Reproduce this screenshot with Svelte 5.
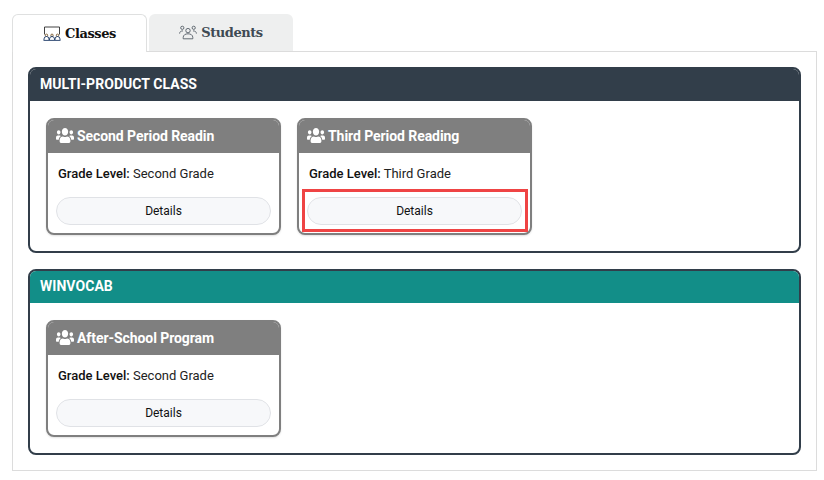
<script>
  const sections = [
    { title: 'MULTI-PRODUCT CLASS', tone: 'slate', cards: [
      { name: 'Second Period Readin', grade: 'Second Grade' },
      { name: 'Third Period Reading', grade: 'Third Grade', marked: true }
    ]},
    { title: 'WINVOCAB', tone: 'teal', cards: [
      { name: 'After-School Program', grade: 'Second Grade' }
    ]}
  ];
</script>

<div class="page">
  <div class="tabs">
    <div class="tab active">
      <svg class="tabicon" viewBox="0 0 18 15" width="18" height="15" fill="none" stroke="#2c2c2c" stroke-width="0.9">
        <path d="M1.5 8.500V1h15v7.500" />
        <circle cx="3.500" cy="9.300" r="1.200" stroke="#7a5a30"/><circle cx="9" cy="9.300" r="1.200" stroke="#7a5a30"/><circle cx="14.500" cy="9.300" r="1.200" stroke="#7a5a30"/>
        <path d="M1 14v-1a2.400 2.400 0 0 1 5 0v1M6.500 14v-1a2.400 2.400 0 0 1 5 0v1M12 14v-1a2.400 2.400 0 0 1 5 0v1M0.500 14.400h17" stroke="#1d3a66"/>
      </svg>
      <span>Classes</span>
    </div>
    <div class="tab">
      <svg class="tabicon" viewBox="0 0 18 15" width="18" height="15" fill="none" stroke="#555e66" stroke-width="0.9">
        <circle cx="9" cy="5.600" r="2.200"/><circle cx="3.300" cy="2.800" r="1.600"/><circle cx="14.700" cy="2.800" r="1.600"/>
        <path d="M4.200 13.800v-1.400c0-2.400 2.200-3.600 4.800-3.600s4.800 1.200 4.800 3.600v1.400zM0.600 8.600c0-1.700 1.300-2.800 3.400-2.700M17.400 8.600c0-1.700-1.300-2.800-3.400-2.700"/>
      </svg>
      <span>Students</span>
    </div>
  </div>
  <div class="panel">
    {#each sections as s}
      <section class="section {s.tone}">
        <h2>{s.title}</h2>
        <div class="cards">
          {#each s.cards as c}
            <article class="card">
              <h3>
                <svg viewBox="0 0 640 512" width="18" height="17" preserveAspectRatio="none" fill="#fff"><path d="M96 224c35.300 0 64-28.700 64-64s-28.700-64-64-64-64 28.700-64 64 28.700 64 64 64zm448 0c35.300 0 64-28.700 64-64s-28.700-64-64-64-64 28.700-64 64 28.700 64 64 64zm32 32h-64c-17.600 0-33.500 7.100-45.100 18.600 40.300 22.100 68.900 62 75.100 109.400h66c17.700 0 32-14.300 32-32v-32c0-35.300-28.700-64-64-64zm-256 0c61.900 0 112-50.100 112-112S381.900 32 320 32 208 82.100 208 144s50.100 112 112 112zm76.800 32h-8.300c-20.800 10-43.900 16-68.500 16s-47.600-6-68.500-16h-8.300C179.600 288 128 339.600 128 403.200V432c0 26.500 21.500 48 48 48h288c26.500 0 48-21.500 48-48v-28.800c0-63.600-51.600-115.200-115.200-115.200zm-223.700-13.400C161.500 263.100 145.600 256 128 256H64c-35.300 0-64 28.700-64 64v32c0 17.700 14.300 32 32 32h65.900c6.300-47.400 34.900-87.300 75.200-109.400z"/></svg>
                <span>{c.name}</span>
              </h3>
              <p><b>Grade Level:</b> {c.grade}</p>
              <div class="action" class:marked={c.marked}>
                <button>Details</button>
              </div>
            </article>
          {/each}
        </div>
      </section>
    {/each}
  </div>
</div>

<style>
  :global(body) { margin: 0; background: #fff; }
  .page { width: 824px; height: 480px; box-sizing: border-box; padding: 14px 7px 0 12px; font-family: Roboto, sans-serif; }
  .tabs { display: flex; gap: 2px; height: 38px; position: relative; z-index: 1; }
  .tab { width: 144px; height: 37px; box-sizing: border-box; background: #eeefef; border-radius: 6px 6px 0 0; display: flex; align-items: center; justify-content: center; gap: 4px; font-family: "DejaVu Serif", serif; font-weight: 700; font-size: 13px; color: #3f4a54; letter-spacing: -0.45px; }
  .tab.active { width: 135px; height: 38px; background: #fff; border: 1px solid #dfe0e0; border-bottom: 0; color: #111; }
  .panel { height: 420px; margin-top: -1px; box-sizing: border-box; border: 1px solid #dcdcdc; padding: 15px 15px; display: flex; flex-direction: column; gap: 16px; }
  .section { height: 186px; box-sizing: border-box; border: 2px solid #323e4a; border-radius: 8px; overflow: hidden; }
  h2 { margin: -2px -2px 0; height: 34px; padding-left: 12px; background: #323e4a; color: #fff; font-size: 14px; font-weight: 700; line-height: 34px; letter-spacing: 0.05px; }
  .teal h2 { background: #128e88; }
  .cards { display: flex; gap: 16px; padding: 17px 0 0 16px; }
  .card { width: 235px; height: 117px; box-sizing: border-box; border: 2px solid #7f7f7f; border-radius: 8px; overflow: hidden; box-shadow: 0 1px 2px rgba(0,0,0,.12); background: #fff; }
  h3 { margin: -2px -2px 0; height: 35px; padding-left: 10px; background: #7f7f7f; color: #fff; font-size: 14px; font-weight: 700; display: flex; align-items: center; gap: 3px; letter-spacing: -0.07px; }
  p { margin: 0; padding: 13px 0 0 10px; font-size: 13px; line-height: 15px; color: #222; }
  b { font-weight: 500; color: #111; }
  .action { margin: 16px 8px 0; position: relative; }
  .marked::after { content: ""; position: absolute; left: -5px; right: -6px; top: -8px; bottom: -7px; border: 3px solid #ef4444; }
  button { display: block; width: 100%; height: 28px; box-sizing: border-box; border: 1px solid #e0e2e6; border-radius: 14px; background: #f7f8fa; font-family: Roboto, sans-serif; font-size: 12px; color: #111; padding: 0; }
</style>
